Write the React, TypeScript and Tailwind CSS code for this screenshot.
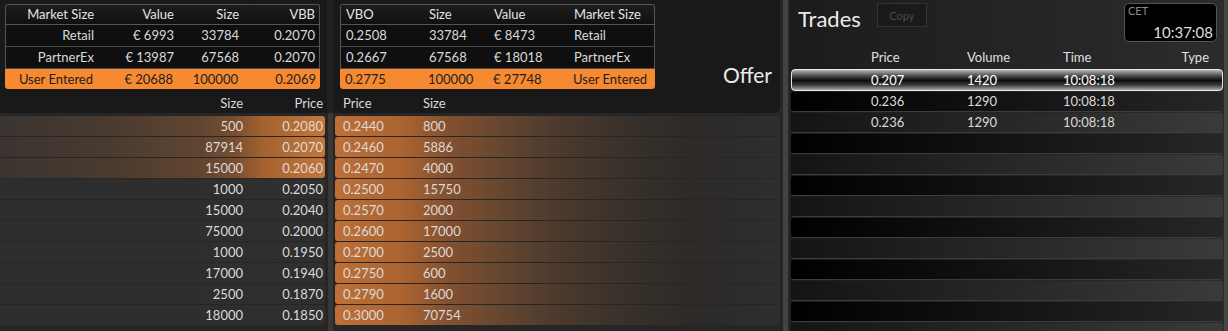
import React from 'react';

type BookRow = { size: string; price: string; hot?: boolean };

const bidSummary = [
  { market: 'Retail', value: '€ 6993', size: '33784', price: '0.2070' },
  { market: 'PartnerEx', value: '€ 13987', size: '67568', price: '0.2070' },
];

const askSummary = [
  { price: '0.2508', size: '33784', value: '€ 8473', market: 'Retail' },
  { price: '0.2667', size: '67568', value: '€ 18018', market: 'PartnerEx' },
];

const bids: BookRow[] = [
  { size: '500', price: '0.2080', hot: true },
  { size: '87914', price: '0.2070', hot: true },
  { size: '15000', price: '0.2060', hot: true },
  { size: '1000', price: '0.2050' },
  { size: '15000', price: '0.2040' },
  { size: '75000', price: '0.2000' },
  { size: '1000', price: '0.1950' },
  { size: '17000', price: '0.1940' },
  { size: '2500', price: '0.1870' },
  { size: '18000', price: '0.1850' },
];

const asks: BookRow[] = [
  { price: '0.2440', size: '800' },
  { price: '0.2460', size: '5886' },
  { price: '0.2470', size: '4000' },
  { price: '0.2500', size: '15750' },
  { price: '0.2570', size: '2000' },
  { price: '0.2600', size: '17000' },
  { price: '0.2700', size: '2500' },
  { price: '0.2750', size: '600' },
  { price: '0.2790', size: '1600' },
  { price: '0.3000', size: '70754' },
];

const trades = [
  { price: '0.207', volume: '1420', time: '10:08:18' },
  { price: '0.236', volume: '1290', time: '10:08:18' },
  { price: '0.236', volume: '1290', time: '10:08:18' },
];

const BidSummary: React.FC = () => (
  <div className="w-[315px]">
    <div className="border-x border-t border-[#545454] rounded-t-[3px] overflow-hidden">
      <div className="flex h-[20px] items-center bg-[linear-gradient(to_bottom,#1d1d1d,#101010)] border-b border-[#545454] text-[#e4e4e4]">
        <div className="w-[93px] text-right pr-[5px]">Market Size</div>
        <div className="w-[80px] text-right pr-[5px]">Value</div>
        <div className="w-[65px] text-right pr-[5px]">Size</div>
        <div className="flex-1 text-right pr-[4px]">VBB</div>
      </div>
      {bidSummary.map((r) => (
        <div key={r.market} className="flex h-[22px] items-center bg-[#0f0f0f] border-b border-[#4a4a4a]">
          <div className="w-[93px] text-right pr-[5px]">{r.market}</div>
          <div className="w-[80px] text-right pr-[5px]">{r.value}</div>
          <div className="w-[65px] text-right pr-[5px]">{r.size}</div>
          <div className="flex-1 text-right pr-[4px]">{r.price}</div>
        </div>
      ))}
    </div>
    <div className="flex h-[20px] items-center bg-[#f78a31] rounded-b-[3px] text-[#1e1e1e]">
      <div className="w-[93px] text-right pr-[5px]">User Entered</div>
      <div className="w-[80px] text-right pr-[5px]">€ 20688</div>
      <div className="w-[65px] text-right pr-[5px]">100000</div>
      <div className="flex-1 text-right pr-[4px]">0.2069</div>
    </div>
  </div>
);

const AskSummary: React.FC = () => (
  <div className="w-[315px]">
    <div className="border-x border-t border-[#545454] rounded-t-[3px] overflow-hidden">
      <div className="flex h-[20px] items-center bg-[linear-gradient(to_bottom,#1d1d1d,#101010)] border-b border-[#545454] text-[#e4e4e4]">
        <div className="w-[83px] pl-[5px]">VBO</div>
        <div className="w-[65px] pl-[5px]">Size</div>
        <div className="w-[80px] pl-[5px]">Value</div>
        <div className="flex-1 pl-[5px]">Market Size</div>
      </div>
      {askSummary.map((r) => (
        <div key={r.market} className="flex h-[22px] items-center bg-[#0f0f0f] border-b border-[#4a4a4a]">
          <div className="w-[83px] pl-[5px]">{r.price}</div>
          <div className="w-[65px] pl-[5px]">{r.size}</div>
          <div className="w-[80px] pl-[5px]">{r.value}</div>
          <div className="flex-1 pl-[5px]">{r.market}</div>
        </div>
      ))}
    </div>
    <div className="flex h-[20px] items-center bg-[#f78a31] rounded-b-[3px] text-[#1e1e1e]">
      <div className="w-[83px] pl-[5px]">0.2775</div>
      <div className="w-[65px] pl-[5px]">100000</div>
      <div className="w-[80px] pl-[5px]">€ 27748</div>
      <div className="flex-1 pl-[5px]">User Entered</div>
    </div>
  </div>
);

const App: React.FC = () => {
  return (
    <div className="flex w-[1228px] h-[331px] overflow-hidden bg-[#262626] text-[13px] leading-none text-[#dadada] font-[Lato,sans-serif]">
      {/* order book */}
      <div className="flex flex-col w-[780px]">
        <div className="flex shrink-0 h-[113px] bg-[#191919] rounded-br-[6px] overflow-hidden">
          <div className="flex flex-col w-[327px] pl-[5px] pt-[4px]">
            <BidSummary />
            <div className="flex mt-auto h-[20px] items-center -ml-[5px] w-[325px]">
              <div className="w-[245px] text-right pr-[2px]">Size</div>
              <div className="flex-1 text-right pr-[2px]">Price</div>
            </div>
          </div>
          <div className="w-[7px] bg-[#212121]" />
          <div className="flex flex-col flex-1 pt-[4px]">
            <div className="flex">
              <div className="ml-[6px]">
                <AskSummary />
              </div>
              <div className="flex-1 flex justify-end items-end pr-[8px] pb-[2px]">
                <span className="text-[21px] leading-[25px] text-[#ececec]">Offer</span>
              </div>
            </div>
            <div className="flex mt-auto h-[20px] items-center ml-[1px]">
              <div className="w-[80px] pl-[8px]">Price</div>
              <div className="pl-[8px]">Size</div>
            </div>
          </div>
        </div>

        <div className="flex flex-1">
          <div className="w-[327px] pt-[3px]">
            {bids.map((b, i) => (
              <div
                key={i}
                className={`flex h-[20px] mb-[1px] w-[325px] items-center rounded-r-[3px] ${
                  b.hot
                    ? 'bg-[linear-gradient(to_right,#3a3430_0%,#4a3b2f_35%,#624530_62%,#774d30_72%,#a5622f_81%,#c4763a_100%)]'
                    : 'bg-[linear-gradient(to_right,#2d2d2d,#2f2f2f)]'
                }`}
              >
                <div className="w-[245px] text-right pr-[2px]">{b.size}</div>
                <div className="flex-1 text-right pr-[2px]">{b.price}</div>
              </div>
            ))}
          </div>
          <div className="w-[7px] flex justify-center">
            <div className="w-[5px] bg-[#383838]" />
          </div>
          <div className="flex-1 pt-[3px]">
            {asks.map((a, i) => (
              <div
                key={i}
                className="flex h-[20px] mb-[1px] ml-[1px] items-center rounded-l-[3px] bg-[linear-gradient(to_right,#bd6f36_0%,#ab6430_15%,#845130_25%,#674631_37%,#4c3a2d_50%,#3a322b_63%,#2d2a28_80%,#2e2e2e_100%)]"
              >
                <div className="w-[80px] pl-[8px]">{a.price}</div>
                <div className="pl-[8px]">{a.size}</div>
              </div>
            ))}
          </div>
        </div>
      </div>

      {/* divider */}
      <div className="w-[10px] flex justify-center">
        <div className="w-[5px] bg-[#434343]" />
      </div>

      {/* trades */}
      <div className="flex flex-col w-[438px] overflow-hidden bg-[linear-gradient(to_right,#1c1c1c,#2c2c2c)] border-r-[4px] border-[#444]">
        <div className="flex shrink-0 h-[48px] items-start">
          <div className="pl-[8px] pt-[7px] text-[22px] leading-[24px] text-[#ececec]">Trades</div>
          <div className="ml-[16px] mt-[3px] w-[50px] h-[24px] flex items-center justify-center bg-[#1a1a1a] border border-[#333] text-[11px] text-[#4a4a4a]">
            Copy
          </div>
          <div className="ml-auto mr-[7px] mt-[3px] w-[93px] h-[39px] bg-black border border-[#555] rounded-[5px] flex flex-col px-[3px]">
            <div className="text-[11px] leading-[12px] pt-[1px] text-[#8a8a8a]">CET</div>
            <div className="text-right text-[15px] leading-[16px] mt-[7px] text-[#dedede]">10:37:08</div>
          </div>
        </div>
        <div className="flex shrink-0 h-[18px] items-center ml-[1px] w-[432px] text-[#e0e0e0]">
          <div className="w-[80px]" />
          <div className="w-[96px]">Price</div>
          <div className="w-[96px]">Volume</div>
          <div className="flex-1">Time</div>
          <div className="pr-[14px]">Type</div>
        </div>
        <div className="mt-[3px] ml-[1px] w-[432px] flex flex-col">
          {Array.from({ length: 13 }).map((_, i) => {
            const t = trades[i];
            const cls =
              i === 0
                ? 'h-[22px] border border-[#e8e8e8] rounded-[4px] bg-[linear-gradient(to_bottom,#b4b4b4_0%,#4a4a4a_30%,#0c0c0c_52%,#3a3a3a_75%,#a8a8a8_100%)] text-white'
                : i % 2 === 1
                ? 'h-[20px] mt-[1px] rounded-[3px] bg-[linear-gradient(to_right,#000000,#262626)] border-b border-[#3c3c3c]'
                : 'h-[20px] mt-[1px] rounded-[3px] bg-[linear-gradient(to_right,#141414,#3a3a3a)] border-b border-[#3c3c3c]';
            return (
              <div key={i} className={`flex shrink-0 items-center ${cls}`}>
                {t && (
                  <>
                    <div className={i === 0 ? 'w-[79px]' : 'w-[80px]'} />
                    <div className="w-[96px]">{t.price}</div>
                    <div className="w-[96px]">{t.volume}</div>
                    <div className="flex-1">{t.time}</div>
                  </>
                )}
              </div>
            );
          })}
        </div>
      </div>
    </div>
  );
};

export default App;
